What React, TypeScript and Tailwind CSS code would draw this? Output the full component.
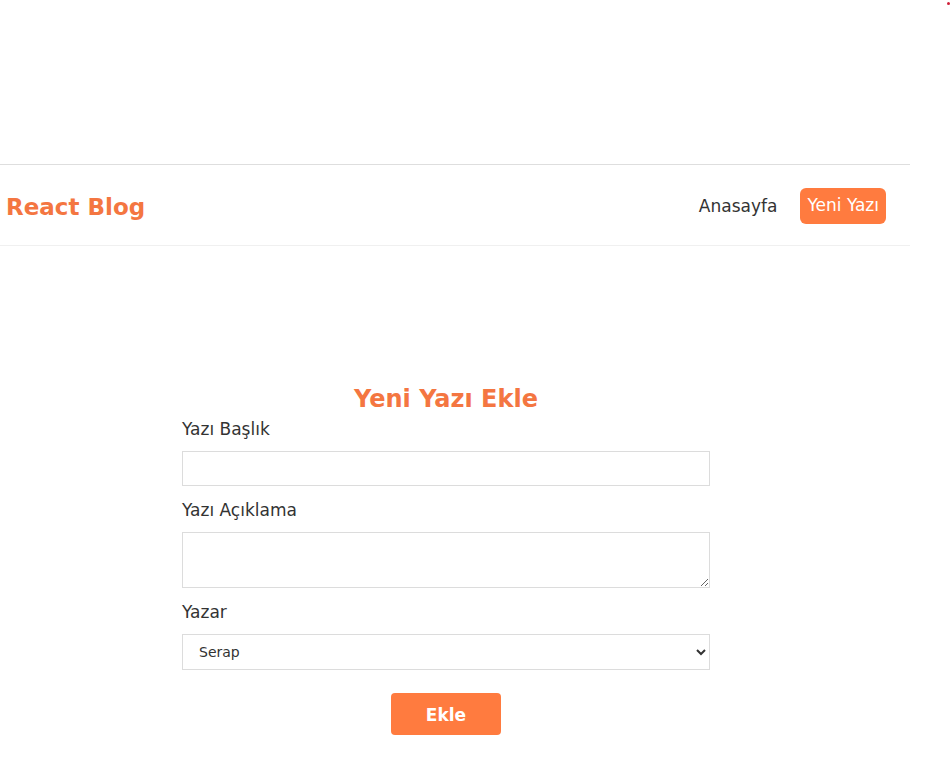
import React from "react";

const font = { fontFamily: '"Comic Sans MS", "DejaVu Sans", sans-serif' };

const App = () => {
  return (
    <div className="relative min-h-[765px] w-full bg-white text-[#333]" style={font}>
      <span className="absolute right-[2px] top-[2px] h-[3px] w-[3px] rounded-full bg-[#d0203a]" />
      <div className="h-[164px]" />
      <nav className="flex h-[82px] w-[910px] items-center justify-between border-t border-b border-t-[#dedede] border-b-[#f0f0f0] pl-[6px] pr-[24px]">
        <h1 className="pt-[4px] text-[23px] font-bold text-[#f47641]">React Blog</h1>
        <div className="flex items-center gap-[23px] pt-[2px]">
          <a href="#_" className="pt-[1px] text-[17px] text-[#333]">
            Anasayfa
          </a>
          <a
            href="#_"
            className="flex h-[36px] items-center rounded-[6px] bg-[#ff7b3f] px-[7px] text-[17px] text-white"
          >
            Yeni Yazı
          </a>
        </div>
      </nav>
      <div className="ml-[182px] mt-[137px] w-[528px]">
        <h2 className="text-center text-[24px] leading-[32px] font-bold text-[#f47641]">Yeni Yazı Ekle</h2>
        <form className="flex flex-col">
          <label className="mt-[2px] mb-[10px] text-[17px] leading-[24px]">Yazı Başlık</label>
          <input
            type="text"
            className="h-[35px] w-full border border-[#dcdcdc] px-[6px] outline-none"
          />
          <label className="mt-[12px] mb-[10px] text-[17px] leading-[24px]">Yazı Açıklama</label>
          <textarea className="h-[56px] w-full border border-[#dcdcdc] px-[6px] outline-none" />
          <label className="mt-[12px] mb-[10px] text-[17px] leading-[24px]">Yazar</label>
          <select className="h-[36px] w-full border border-[#dcdcdc] bg-white pl-[12px] pr-[4px] text-[14px] outline-none" style={font}>
            <option>Serap</option>
            <option>Ahmet</option>
          </select>
          <button
            type="button"
            className="mx-auto mt-[23px] flex h-[42px] w-[110px] items-center justify-center rounded-[4px] bg-[#ff7b3f] pt-[4px] text-[17px] font-bold text-white"
          >
            Ekle
          </button>
        </form>
      </div>
    </div>
  );
};

export default App;
